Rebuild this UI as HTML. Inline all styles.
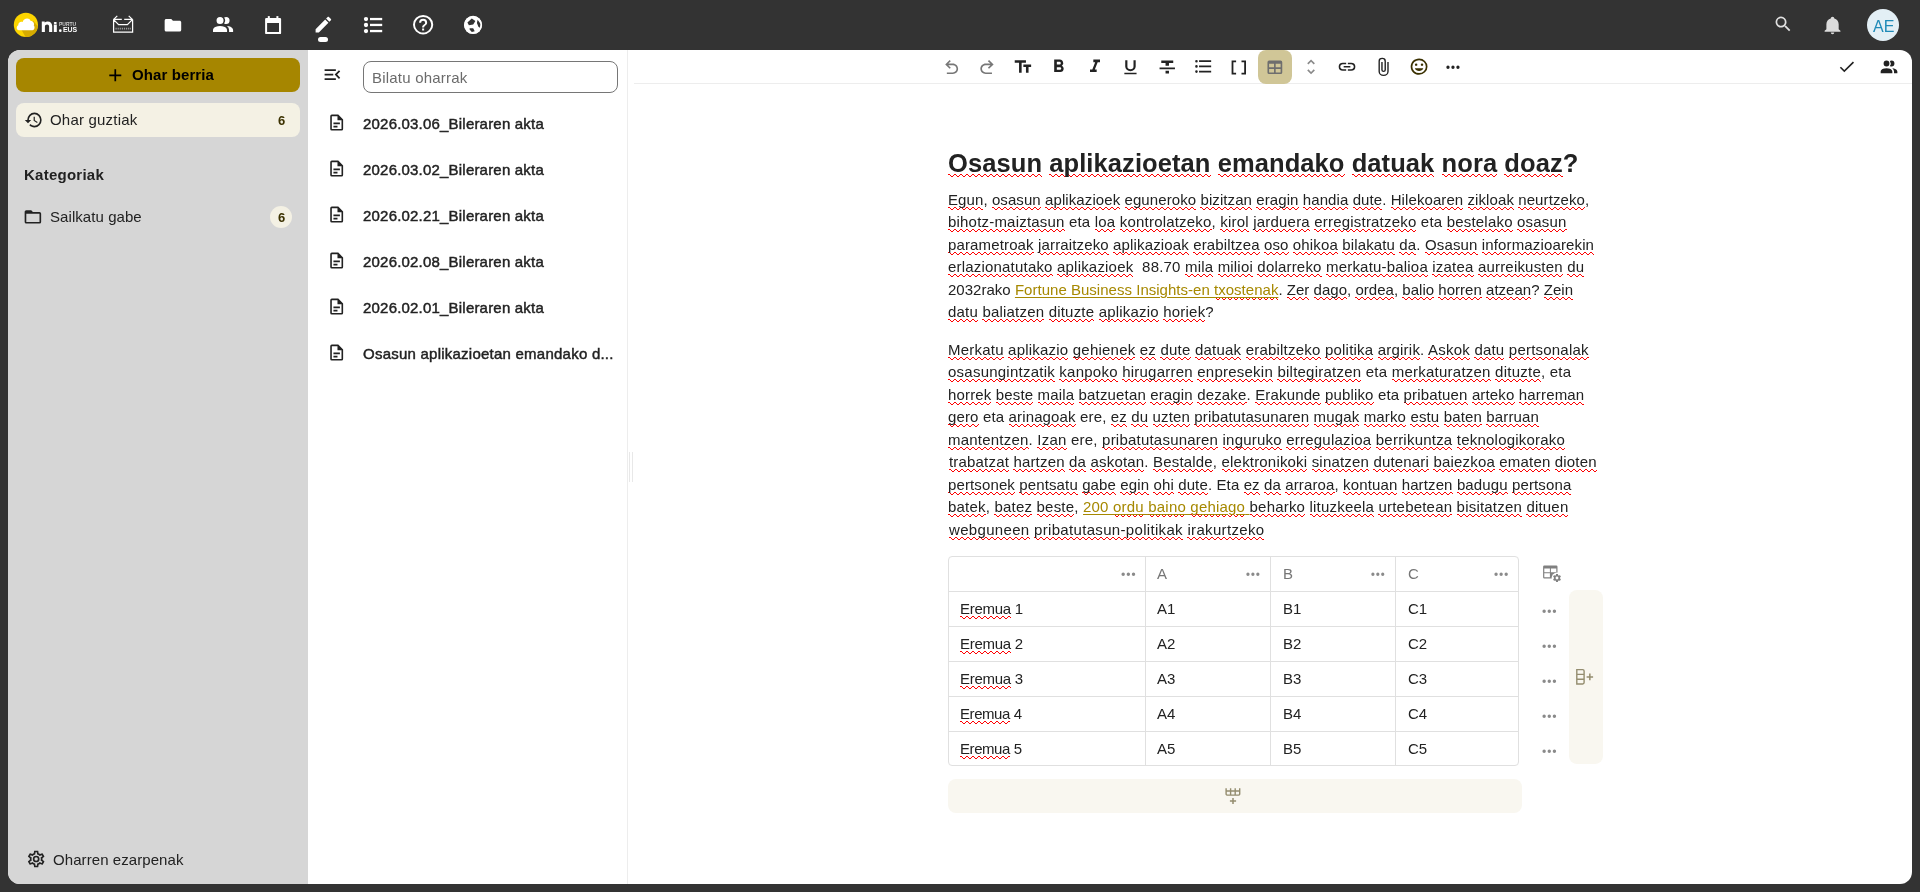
<!DOCTYPE html>
<html><head><meta charset="utf-8">
<style>
*{box-sizing:border-box;margin:0;padding:0}
html,body{width:1920px;height:892px;overflow:hidden;background:#333333;font-family:"Liberation Sans",sans-serif;color:#222}
.a{position:absolute}
.t{position:absolute;white-space:nowrap;will-change:transform}
svg{position:absolute;display:block;overflow:visible}
.w{padding-bottom:3px;background-image:linear-gradient(90deg,#f00 0 2px,transparent 2px 6px),linear-gradient(90deg,transparent 0 2px,#f00 2px 3px,transparent 3px 5px,#f00 5px 6px),linear-gradient(90deg,transparent 0 3px,#f00 3px 5px,transparent 5px 6px);background-repeat:repeat-x;background-size:6px 1px;}
.s15 .w{background-position:0 16px,0 17px,0 18px}
.s25 .w{background-position:0 25px,0 26px,0 27px}
.lk{color:#a68800;text-decoration:underline;text-underline-offset:2px;text-decoration-color:#a68800}
</style></head><body>
<div class="a" style="left:8px;top:50px;width:1904px;height:834px;background:#fff;border-radius:12px;overflow:hidden"></div>
<div class="a" style="left:8px;top:50px;width:300px;height:834px;background:#d6d6d6;border-radius:12px 0 0 12px"></div>
<div class="a" style="left:627px;top:50px;width:1px;height:834px;background:#ededed"></div>
<div class="a" style="left:634px;top:83px;width:1278px;height:1px;background:#ededed"></div>
<div class="a" style="left:629px;top:452px;width:1px;height:30px;background:#e8e8e8"></div>
<div class="a" style="left:632px;top:452px;width:1px;height:30px;background:#e8e8e8"></div>
<svg style="left:8px;top:8px;width:80px;height:34px" viewBox="8 8 80 34"><defs><clipPath id="lc"><circle cx="25.9" cy="24.9" r="12.1"/></clipPath></defs><circle cx="25.9" cy="24.9" r="12.1" fill="#fcd500"/><path clip-path="url(#lc)" d="M21 29 L33.5 21 L45 35 L30 45 Z" fill="#d6ab00"/><path d="M18.8 30.3 C16.4 30.3 16 26.3 18.3 25.3 C18 22.3 21 20.9 22.7 22 C23.3 17.9 29.6 17.2 30.7 21 C33 20.9 34.8 23.3 33.8 25.6 C35.3 27.1 34.4 30.3 32.5 30.3 Z" fill="#fff"/><path d="M41.8 32 V21.6 H44.7 V22.6 C45.5 21.8 46.5 21.4 47.6 21.4 C50.4 21.4 52.2 23.2 52.2 26 V32 H49.1 V26.4 C49.1 25.1 48.3 24.4 47.2 24.4 C45.9 24.4 44.9 25.2 44.9 26.6 V32 Z" fill="#fff"/><rect x="53.8" y="24.5" width="3" height="7.5" fill="#fff"/><rect x="53.8" y="22" width="3" height="1.9" rx="0.9" fill="#fff"/><circle cx="60.3" cy="30.7" r="1.35" fill="#fff"/></svg>
<div class="t" style="left:59px;top:22.6px;font-size:4.6px;line-height:4.6px;font-weight:700;color:#d0d0d0;transform:scaleX(1.08);transform-origin:0 0">PURTU</div>
<div class="t" style="left:62.5px;top:27.1px;font-size:6.9px;line-height:6.9px;font-weight:700;color:#fff">EUS</div>
<svg style="left:105px;top:10px;width:40px;height:30px" viewBox="105 10 40 30"><path d="M113.6 19.4 V32.2 H132.6 V19.4 M113.4 19.4 L118.6 24.6 H127.4 L132.6 19.4 M113.2 19.4 H121.8 M124.2 19.4 H132.8 M117.3 15.9 L113.4 19.6 M128.7 15.9 L132.6 19.6" fill="none" stroke="#fff" stroke-width="1.25"/><path d="M115.5 28.6 H131" stroke="#9a9a9a" stroke-width="1.6" stroke-dasharray="1.2 0.9"/></svg>
<svg style="left:163.04px;top:15.81px;width:19.86px;height:18.53px" viewBox="0 0 24 24" preserveAspectRatio="none"><path fill="#ffffff" d="M10,4H4C2.89,4 2,4.89 2,6V18A2,2 0 0,0 4,20H20A2,2 0 0,0 22,18V8C22,6.89 21.1,6 20,6H12L10,4Z"/></svg>
<svg style="left:210.89px;top:12.90px;width:24.12px;height:24.00px" viewBox="0 0 24 24" preserveAspectRatio="none"><path fill="#ffffff" d="M16 17V19H2V17S2 13 9 13 16 17 16 17M12.5 7.5A3.5 3.5 0 1 0 9 11A3.5 3.5 0 0 0 12.5 7.5M15.94 13A5.32 5.32 0 0 1 18 17V19H22V17S22 13.37 15.94 13M15 4A3.39 3.39 0 0 0 13.07 4.59A5 5 0 0 1 13.07 10.41A3.39 3.39 0 0 0 15 11A3.5 3.5 0 0 0 18.5 7.5A3.5 3.5 0 0 0 15 4Z"/></svg>
<svg style="left:258px;top:10px;width:30px;height:30px" viewBox="258 10 30 30"><path fill-rule="evenodd" fill="#fff" d="M266.3 17.9 H279.9 A1.2 1.2 0 0 1 281.1 19.1 V32.9 A1.2 1.2 0 0 1 279.9 34.1 H266.3 A1.2 1.2 0 0 1 265.1 32.9 V19.1 A1.2 1.2 0 0 1 266.3 17.9 Z M267.1 23.1 V31.9 H279 V23.1 Z"/><rect x="267.8" y="16.1" width="2" height="2.5" fill="#fff"/><rect x="276.4" y="16.1" width="2" height="2.5" fill="#fff"/></svg>
<svg style="left:312.50px;top:14.47px;width:20.80px;height:21.07px" viewBox="0 0 24 24" preserveAspectRatio="none"><path fill="#ffffff" d="M20.71,7.04C21.1,6.65 21.1,6 20.71,5.63L18.37,3.29C18,2.9 17.35,2.9 16.96,3.29L15.12,5.12L18.87,8.87M3,17.25V21H6.75L17.81,9.93L14.06,6.18L3,17.25Z"/></svg>
<div class="a" style="left:317.7px;top:36.8px;width:10.400000000000034px;height:5.200000000000003px;background:#fff;border-radius:3px"></div>
<svg style="left:355px;top:10px;width:30px;height:30px" viewBox="355 10 30 30"><circle cx="366" cy="19.1" r="2.15" fill="#fff"/><circle cx="366" cy="25" r="2.15" fill="#fff"/><circle cx="366" cy="31.1" r="2.15" fill="#fff"/><rect x="370" y="17.9" width="12.2" height="2.3" fill="#fff"/><rect x="370" y="23.8" width="12.2" height="2.3" fill="#fff"/><rect x="370" y="29.9" width="12.2" height="2.3" fill="#fff"/></svg>
<svg style="left:410.78px;top:13.45px;width:24.24px;height:23.40px" viewBox="0 0 24 24" preserveAspectRatio="none"><path fill="#ffffff" d="M11,18H13V16H11V18M12,2A10,10 0 0,0 2,12A10,10 0 0,0 12,22A10,10 0 0,0 22,12A10,10 0 0,0 12,2M12,20C7.59,20 4,16.41 4,12C4,7.59 7.59,4 12,4C16.41,4 20,7.59 20,12C20,16.41 16.41,20 12,20M12,6A4,4 0 0,0 8,10H10A2,2 0 0,1 12,8A2,2 0 0,1 14,10C14,12 11,11.75 11,15H13C13,12.75 16,12.5 16,10A4,4 0 0,0 12,6Z"/></svg>
<svg style="left:460px;top:12px;width:26px;height:26px" viewBox="460 12 26 26"><circle cx="473.05" cy="24.95" r="9.1" fill="#fff"/><path fill="#333" d="M467.4 22.4 L471.8 18.6 L475.4 20.9 L473.2 24.6 L468.9 25.3 Z M477.6 19.8 L480.7 23.9 L480 27.8 L478.4 26.8 L476.9 23.1 Z M469.6 28.2 L473.2 28.2 L474.7 31.2 L471.8 31.9 L469.6 29.4 Z"/><circle cx="473.05" cy="24.95" r="8.2" fill="none" stroke="#fff" stroke-width="1.3"/></svg>
<svg style="left:1772.66px;top:14.46px;width:20.30px;height:20.30px" viewBox="0 0 24 24" preserveAspectRatio="none"><path fill="#e0e0e0" d="M9.5,3A6.5,6.5 0 0,1 16,9.5C16,11.11 15.41,12.59 14.44,13.73L14.71,14H15.5L20.5,19L19,20.5L14,15.5V14.71L13.73,14.44C12.59,15.41 11.11,16 9.5,16A6.5,6.5 0 0,1 3,9.5A6.5,6.5 0 0,1 9.5,3M9.5,5C7,5 5,7 5,9.5C5,12 7,14 9.5,14C12,14 14,12 14,9.5C14,7 12,5 9.5,5Z"/></svg>
<svg style="left:1822.37px;top:15.03px;width:21.07px;height:20.00px" viewBox="0 0 24 24" preserveAspectRatio="none"><path fill="#dcdcdc" d="M21,19V20H3V19L5,17V11C5,7.9 7.03,5.17 10,4.29C10,4.19 10,4.1 10,4A2,2 0 0,1 12,2A2,2 0 0,1 14,4C14,4.1 14,4.19 14,4.29C16.97,5.17 19,7.9 19,11V17L21,19M14,21A2,2 0 0,1 12,23A2,2 0 0,1 10,21"/></svg>
<div class="a" style="left:1867px;top:9px;width:32px;height:32px;border-radius:50%;background:#e3eff5"></div>
<div class="t" style="left:1872.7px;top:18.5px;font-size:16px;line-height:16px;color:#1f8ab8">AE</div>
<div class="a" style="left:16px;top:58px;width:284px;height:34px;background:#a68600;border-radius:8px"></div>
<svg style="left:104.71px;top:64.71px;width:20.57px;height:20.57px" viewBox="0 0 24 24" preserveAspectRatio="none"><path fill="#000" d="M19,13H13V19H11V13H5V11H11V5H13V11H19V13Z"/></svg>
<div class="a" style="left:16px;top:103px;width:284px;height:34px;background:#f4f1e4;border-radius:8px"></div>
<svg style="left:23.60px;top:110.00px;width:19.26px;height:20.00px" viewBox="0 0 24 24" preserveAspectRatio="none"><path fill="#222" d="M13.5,8H12V13L16.28,15.54L17,14.33L13.5,12.25V8M13,3A9,9 0 0,0 4,12H1L4.96,16.03L9,12H6A7,7 0 0,1 13,5A7,7 0 0,1 20,12A7,7 0 0,1 13,19C11.07,19 9.32,18.21 8.06,16.94L6.64,18.36C8.27,20 10.5,21 13,21A9,9 0 0,0 22,12A9,9 0 0,0 13,3"/></svg>
<svg style="left:23.05px;top:206.68px;width:19.80px;height:19.95px" viewBox="0 0 24 24" preserveAspectRatio="none"><path fill="#222" d="M20,18H4V8H20M20,6H12L10,4H4C2.89,4 2,4.89 2,6V18A2,2 0 0,0 4,20H20A2,2 0 0,0 22,18V8C22,6.89 21.1,6 20,6Z"/></svg>
<div class="a" style="left:270px;top:206px;width:22px;height:22px;background:#f4f1e4;border-radius:11px"></div>
<svg style="left:25.78px;top:849.13px;width:20.35px;height:20.04px" viewBox="0 0 24 24" preserveAspectRatio="none"><path fill="#222" d="M12,8A4,4 0 0,1 16,12A4,4 0 0,1 12,16A4,4 0 0,1 8,12A4,4 0 0,1 12,8M12,10A2,2 0 0,0 10,12A2,2 0 0,0 12,14A2,2 0 0,0 14,12A2,2 0 0,0 12,10M10,22C9.75,22 9.54,21.82 9.5,21.58L9.13,18.93C8.5,18.68 7.96,18.34 7.44,17.94L4.95,18.95C4.73,19.03 4.46,18.95 4.34,18.73L2.34,15.27C2.21,15.05 2.27,14.78 2.46,14.63L4.57,12.97L4.5,12L4.57,11L2.46,9.37C2.27,9.22 2.21,8.95 2.34,8.73L4.34,5.27C4.46,5.05 4.73,4.96 4.95,5.05L7.44,6.05C7.96,5.66 8.5,5.32 9.13,5.07L9.5,2.42C9.54,2.18 9.75,2 10,2H14C14.25,2 14.46,2.18 14.5,2.42L14.87,5.07C15.5,5.32 16.04,5.66 16.56,6.05L19.05,5.05C19.27,4.96 19.54,5.05 19.66,5.27L21.66,8.73C21.79,8.95 21.73,9.22 21.54,9.37L19.43,11L19.5,12L19.43,13L21.54,14.63C21.73,14.78 21.79,15.05 21.66,15.27L19.66,18.73C19.54,18.95 19.27,19.04 19.05,18.95L16.56,17.95C16.04,18.34 15.5,18.68 14.87,18.93L14.5,21.58C14.46,21.82 14.25,22 14,22H10M11.25,4L10.88,6.61C9.68,6.86 8.62,7.5 7.85,8.39L5.44,7.35L4.69,8.65L6.8,10.2C6.4,11.37 6.4,12.64 6.8,13.8L4.68,15.36L5.43,16.66L7.86,15.62C8.63,16.5 9.68,17.14 10.87,17.38L11.24,20H12.76L13.13,17.39C14.32,17.14 15.37,16.5 16.14,15.62L18.57,16.66L19.32,15.36L17.2,13.81C17.6,12.64 17.6,11.37 17.2,10.2L19.31,8.65L18.56,7.35L16.15,8.39C15.38,7.5 14.32,6.86 13.12,6.62L12.75,4H11.25Z"/></svg>
<svg style="left:322.20px;top:64.20px;width:20.80px;height:21.20px" viewBox="0 0 24 24" preserveAspectRatio="none"><path fill="#222" d="M21,15.61L19.59,17L14.58,12L19.59,7L21,8.39L17.44,12L21,15.61M3,6H16V8H3V6M3,13V11H13V13H3M3,18V16H16V18H3Z"/></svg>
<div class="a" style="left:363px;top:61px;width:255px;height:32px;border:1px solid #767676;border-radius:8px;background:#fff"></div>
<svg style="left:327.17px;top:113.30px;width:19.35px;height:19.20px" viewBox="0 0 24 24" preserveAspectRatio="none"><path fill="#222" d="M6,2A2,2 0 0,0 4,4V20A2,2 0 0,0 6,22H18A2,2 0 0,0 20,20V8L14,2H6M6,4H13V9H18V20H6V4M8,12V14H16V12H8M8,16V18H13V16H8Z"/></svg>
<svg style="left:327.17px;top:159.30px;width:19.35px;height:19.20px" viewBox="0 0 24 24" preserveAspectRatio="none"><path fill="#222" d="M6,2A2,2 0 0,0 4,4V20A2,2 0 0,0 6,22H18A2,2 0 0,0 20,20V8L14,2H6M6,4H13V9H18V20H6V4M8,12V14H16V12H8M8,16V18H13V16H8Z"/></svg>
<svg style="left:327.17px;top:205.30px;width:19.35px;height:19.20px" viewBox="0 0 24 24" preserveAspectRatio="none"><path fill="#222" d="M6,2A2,2 0 0,0 4,4V20A2,2 0 0,0 6,22H18A2,2 0 0,0 20,20V8L14,2H6M6,4H13V9H18V20H6V4M8,12V14H16V12H8M8,16V18H13V16H8Z"/></svg>
<svg style="left:327.17px;top:251.30px;width:19.35px;height:19.20px" viewBox="0 0 24 24" preserveAspectRatio="none"><path fill="#222" d="M6,2A2,2 0 0,0 4,4V20A2,2 0 0,0 6,22H18A2,2 0 0,0 20,20V8L14,2H6M6,4H13V9H18V20H6V4M8,12V14H16V12H8M8,16V18H13V16H8Z"/></svg>
<svg style="left:327.17px;top:297.30px;width:19.35px;height:19.20px" viewBox="0 0 24 24" preserveAspectRatio="none"><path fill="#222" d="M6,2A2,2 0 0,0 4,4V20A2,2 0 0,0 6,22H18A2,2 0 0,0 20,20V8L14,2H6M6,4H13V9H18V20H6V4M8,12V14H16V12H8M8,16V18H13V16H8Z"/></svg>
<svg style="left:327.17px;top:343.30px;width:19.35px;height:19.20px" viewBox="0 0 24 24" preserveAspectRatio="none"><path fill="#222" d="M6,2A2,2 0 0,0 4,4V20A2,2 0 0,0 6,22H18A2,2 0 0,0 20,20V8L14,2H6M6,4H13V9H18V20H6V4M8,12V14H16V12H8M8,16V18H13V16H8Z"/></svg>
<div class="a" style="left:1258px;top:50px;width:34px;height:34px;background:#d0c697;border-radius:8px"></div>
<svg style="left:941.57px;top:57.60px;width:19.35px;height:19.20px" viewBox="0 0 24 24" preserveAspectRatio="none"><path fill="#777" d="M20 13.5C20 17.09 17.09 20 13.5 20H6V18H13.5C16 18 18 16 18 13.5S16 9 13.5 9H7.83L10.91 12.09L9.5 13.5L4 8L9.5 2.5L10.92 3.91L7.83 7H13.5C17.09 7 20 9.91 20 13.5Z"/></svg>
<svg style="left:976.67px;top:57.60px;width:19.95px;height:19.20px" viewBox="0 0 24 24" preserveAspectRatio="none"><path fill="#777" d="M4 13.5C4 17.09 6.91 20 10.5 20H18V18H10.5C8 18 6 16 6 13.5S8 9 10.5 9H16.17L13.09 12.09L14.5 13.5L20 8L14.5 2.5L13.08 3.91L16.17 7H10.5C6.91 7 4 9.91 4 13.5Z"/></svg>
<svg style="left:1012.67px;top:56.79px;width:20.72px;height:19.84px" viewBox="0 0 24 24" preserveAspectRatio="none"><path fill="#222" d="M2 4V7H7V19H10V7H15V4H2M21 9H12V12H15V19H18V12H21V9Z"/></svg>
<svg style="left:1048.31px;top:56.43px;width:21.21px;height:21.43px" viewBox="0 0 24 24" preserveAspectRatio="none"><path fill="#222" d="M13.5,15.5H10V12.5H13.5A1.5,1.5 0 0,1 15,14A1.5,1.5 0 0,1 13.5,15.5M10,6.5H13A1.5,1.5 0 0,1 14.5,8A1.5,1.5 0 0,1 13,9.5H10M15.6,10.79C16.57,10.11 17.25,9 17.25,8C17.25,5.74 15.5,4 13.25,4H7V18H14.04C16.14,18 17.75,16.3 17.75,14.21C17.75,12.69 16.89,11.39 15.6,10.79Z"/></svg>
<svg style="left:1085.00px;top:56.43px;width:20.00px;height:21.43px" viewBox="0 0 24 24" preserveAspectRatio="none"><path fill="#222" d="M10,4V7H12.21L8.79,15H6V18H14V15H11.79L15.21,7H18V4H10Z"/></svg>
<svg style="left:1120.44px;top:57.67px;width:20.91px;height:18.67px" viewBox="0 0 24 24" preserveAspectRatio="none"><path fill="#222" d="M5,21H19V19H5V21M12,17A6,6 0 0,0 18,11V3H15.5V11A3.5,3.5 0 0,1 12,14.5A3.5,3.5 0 0,1 8.5,11V3H6V11A6,6 0 0,0 12,17Z"/></svg>
<svg style="left:1156.73px;top:56.53px;width:20.53px;height:20.80px" viewBox="0 0 24 24" preserveAspectRatio="none"><path fill="#222" d="M3,14H21V12H3M5,4V7H10V10H14V7H19V4M10,19H14V16H10V19Z"/></svg>
<svg style="left:1192.64px;top:56.10px;width:20.76px;height:20.80px" viewBox="0 0 24 24" preserveAspectRatio="none"><path fill="#222" d="M7,5H21V7H7V5M7,13V11H21V13H7M4,4.5A1.5,1.5 0 0,1 5.5,6A1.5,1.5 0 0,1 4,7.5A1.5,1.5 0 0,1 2.5,6A1.5,1.5 0 0,1 4,4.5M4,10.5A1.5,1.5 0 0,1 5.5,12A1.5,1.5 0 0,1 4,13.5A1.5,1.5 0 0,1 2.5,12A1.5,1.5 0 0,1 4,10.5M7,19V17H21V19H7M4,16.5A1.5,1.5 0 0,1 5.5,18A1.5,1.5 0 0,1 4,19.5A1.5,1.5 0 0,1 2.5,18A1.5,1.5 0 0,1 4,16.5Z"/></svg>
<svg style="left:1228.40px;top:56.50px;width:21.60px;height:21.00px" viewBox="0 0 24 24" preserveAspectRatio="none"><path fill="#222" d="M15,4V6H18V18H15V20H20V4M4,4V20H9V18H6V6H9V4H4Z"/></svg>
<svg style="left:1265.03px;top:56.78px;width:19.73px;height:20.55px" viewBox="0 0 24 24" preserveAspectRatio="none"><path fill="#6e6e6e" d="M5,4H19A2,2 0 0,1 21,6V18A2,2 0 0,1 19,20H5A2,2 0 0,1 3,18V6A2,2 0 0,1 5,4M5,8V12H11V8H5M13,8V12H19V8H13M5,14V18H11V14H5M13,14V18H19V14H13Z"/></svg>
<svg style="left:1300.78px;top:57.23px;width:20.13px;height:19.73px" viewBox="0 0 24 24" preserveAspectRatio="none"><path fill="#8a8a8a" d="M12,18.17L8.83,15L7.42,16.41L12,21L16.59,16.41L15.17,15M12,5.83L15.17,9L16.58,7.59L12,3L7.41,7.59L8.83,9L12,5.83Z"/></svg>
<svg style="left:1336.93px;top:57.33px;width:20.04px;height:19.44px" viewBox="0 0 24 24" preserveAspectRatio="none"><path fill="#222" d="M3.9,12C3.9,10.29 5.29,8.9 7,8.9H11V7H7A5,5 0 0,0 2,12A5,5 0 0,0 7,17H11V15.1H7C5.29,15.1 3.9,13.71 3.9,12M8,13H16V11H8V13M17,7H13V8.9H17C18.71,8.9 20.1,10.29 20.1,12C20.1,13.71 18.71,15.1 17,15.1H13V17H17A5,5 0 0,0 22,12A5,5 0 0,0 17,7Z"/></svg>
<svg style="left:1371.91px;top:56.67px;width:22.25px;height:19.96px" viewBox="0 0 24 24" preserveAspectRatio="none"><path fill="#222" d="M16.5,6V17.5A4,4 0 0,1 12.5,21.5A4,4 0 0,1 8.5,17.5V5A2.5,2.5 0 0,1 11,2.5A2.5,2.5 0 0,1 13.5,5V15.5A1,1 0 0,1 12.5,16.5A1,1 0 0,1 11.5,15.5V6H10V15.5A2.5,2.5 0 0,0 12.5,18A2.5,2.5 0 0,0 15,15.5V5A4,4 0 0,0 11,1A4,4 0 0,0 7,5V17.5A5.5,5.5 0 0,0 12.5,23A5.5,5.5 0 0,0 18,17.5V6H16.5Z"/></svg>
<svg style="left:1408.82px;top:57.29px;width:20.16px;height:19.32px" viewBox="0 0 24 24" preserveAspectRatio="none"><path fill="#3a3000" d="M12,2C6.47,2 2,6.47 2,12C2,17.53 6.47,22 12,22A10,10 0 0,0 22,12A10,10 0 0,0 12,2M12,20A8,8 0 0,1 4,12A8,8 0 0,1 12,4A8,8 0 0,1 20,12A8,8 0 0,1 12,20M8.5,11A1.5,1.5 0 0,0 10,9.5A1.5,1.5 0 0,0 8.5,8A1.5,1.5 0 0,0 7,9.5A1.5,1.5 0 0,0 8.5,11M15.5,11A1.5,1.5 0 0,0 17,9.5A1.5,1.5 0 0,0 15.5,8A1.5,1.5 0 0,0 14,9.5A1.5,1.5 0 0,0 15.5,11M12,17.5C14.33,17.5 16.31,16.04 17.11,14H6.89C7.69,16.04 9.67,17.5 12,17.5Z"/></svg>
<svg style="left:1443.08px;top:56.70px;width:19.95px;height:20.40px" viewBox="0 0 24 24" preserveAspectRatio="none"><path fill="#222" d="M16,12A2,2 0 0,1 18,10A2,2 0 0,1 20,12A2,2 0 0,1 18,14A2,2 0 0,1 16,12M10,12A2,2 0 0,1 12,10A2,2 0 0,1 14,12A2,2 0 0,1 12,14A2,2 0 0,1 10,12M4,12A2,2 0 0,1 6,10A2,2 0 0,1 8,12A2,2 0 0,1 6,14A2,2 0 0,1 4,12Z"/></svg>
<svg style="left:1837.16px;top:57.40px;width:19.47px;height:19.33px" viewBox="0 0 24 24" preserveAspectRatio="none"><path fill="#222" d="M21,7L9,19L3.5,13.5L4.91,12.09L9,16.17L19.59,5.59L21,7Z"/></svg>
<svg style="left:1879.03px;top:56.56px;width:20.04px;height:20.64px" viewBox="0 0 24 24" preserveAspectRatio="none"><path fill="#222" d="M16 17V19H2V17S2 13 9 13 16 17 16 17M12.5 7.5A3.5 3.5 0 1 0 9 11A3.5 3.5 0 0 0 12.5 7.5M15.94 13A5.32 5.32 0 0 1 18 17V19H22V17S22 13.37 15.94 13M15 4A3.39 3.39 0 0 0 13.07 4.59A5 5 0 0 1 13.07 10.41A3.39 3.39 0 0 0 15 11A3.5 3.5 0 0 0 18.5 7.5A3.5 3.5 0 0 0 15 4Z"/></svg>
<div class="a" style="left:948px;top:556px;width:571px;height:210px;border:1px solid #e0e0e0;border-radius:4px"></div>
<div class="a" style="left:1145px;top:556px;width:1px;height:210px;background:#e0e0e0"></div>
<div class="a" style="left:1270px;top:556px;width:1px;height:210px;background:#e0e0e0"></div>
<div class="a" style="left:1395px;top:556px;width:1px;height:210px;background:#e0e0e0"></div>
<div class="a" style="left:948px;top:591px;width:571px;height:1px;background:#e0e0e0"></div>
<div class="a" style="left:948px;top:626px;width:571px;height:1px;background:#e0e0e0"></div>
<div class="a" style="left:948px;top:661px;width:571px;height:1px;background:#e0e0e0"></div>
<div class="a" style="left:948px;top:696px;width:571px;height:1px;background:#e0e0e0"></div>
<div class="a" style="left:948px;top:731px;width:571px;height:1px;background:#e0e0e0"></div>
<svg style="left:1117.55px;top:563.70px;width:20.70px;height:20.40px" viewBox="0 0 24 24" preserveAspectRatio="none"><path fill="#8a8a8a" d="M16,12A2,2 0 0,1 18,10A2,2 0 0,1 20,12A2,2 0 0,1 18,14A2,2 0 0,1 16,12M10,12A2,2 0 0,1 12,10A2,2 0 0,1 14,12A2,2 0 0,1 12,14A2,2 0 0,1 10,12M4,12A2,2 0 0,1 6,10A2,2 0 0,1 8,12A2,2 0 0,1 6,14A2,2 0 0,1 4,12Z"/></svg>
<svg style="left:1243.10px;top:563.70px;width:19.80px;height:20.40px" viewBox="0 0 24 24" preserveAspectRatio="none"><path fill="#8a8a8a" d="M16,12A2,2 0 0,1 18,10A2,2 0 0,1 20,12A2,2 0 0,1 18,14A2,2 0 0,1 16,12M10,12A2,2 0 0,1 12,10A2,2 0 0,1 14,12A2,2 0 0,1 12,14A2,2 0 0,1 10,12M4,12A2,2 0 0,1 6,10A2,2 0 0,1 8,12A2,2 0 0,1 6,14A2,2 0 0,1 4,12Z"/></svg>
<svg style="left:1368.32px;top:563.70px;width:19.65px;height:20.40px" viewBox="0 0 24 24" preserveAspectRatio="none"><path fill="#8a8a8a" d="M16,12A2,2 0 0,1 18,10A2,2 0 0,1 20,12A2,2 0 0,1 18,14A2,2 0 0,1 16,12M10,12A2,2 0 0,1 12,10A2,2 0 0,1 14,12A2,2 0 0,1 12,14A2,2 0 0,1 10,12M4,12A2,2 0 0,1 6,10A2,2 0 0,1 8,12A2,2 0 0,1 6,14A2,2 0 0,1 4,12Z"/></svg>
<svg style="left:1491.03px;top:563.70px;width:20.25px;height:20.40px" viewBox="0 0 24 24" preserveAspectRatio="none"><path fill="#8a8a8a" d="M16,12A2,2 0 0,1 18,10A2,2 0 0,1 20,12A2,2 0 0,1 18,14A2,2 0 0,1 16,12M10,12A2,2 0 0,1 12,10A2,2 0 0,1 14,12A2,2 0 0,1 12,14A2,2 0 0,1 10,12M4,12A2,2 0 0,1 6,10A2,2 0 0,1 8,12A2,2 0 0,1 6,14A2,2 0 0,1 4,12Z"/></svg>
<svg style="left:1538.78px;top:600.50px;width:20.55px;height:20.40px" viewBox="0 0 24 24" preserveAspectRatio="none"><path fill="#8a8a8a" d="M16,12A2,2 0 0,1 18,10A2,2 0 0,1 20,12A2,2 0 0,1 18,14A2,2 0 0,1 16,12M10,12A2,2 0 0,1 12,10A2,2 0 0,1 14,12A2,2 0 0,1 12,14A2,2 0 0,1 10,12M4,12A2,2 0 0,1 6,10A2,2 0 0,1 8,12A2,2 0 0,1 6,14A2,2 0 0,1 4,12Z"/></svg>
<svg style="left:1538.78px;top:635.50px;width:20.55px;height:20.40px" viewBox="0 0 24 24" preserveAspectRatio="none"><path fill="#8a8a8a" d="M16,12A2,2 0 0,1 18,10A2,2 0 0,1 20,12A2,2 0 0,1 18,14A2,2 0 0,1 16,12M10,12A2,2 0 0,1 12,10A2,2 0 0,1 14,12A2,2 0 0,1 12,14A2,2 0 0,1 10,12M4,12A2,2 0 0,1 6,10A2,2 0 0,1 8,12A2,2 0 0,1 6,14A2,2 0 0,1 4,12Z"/></svg>
<svg style="left:1538.78px;top:670.50px;width:20.55px;height:20.40px" viewBox="0 0 24 24" preserveAspectRatio="none"><path fill="#8a8a8a" d="M16,12A2,2 0 0,1 18,10A2,2 0 0,1 20,12A2,2 0 0,1 18,14A2,2 0 0,1 16,12M10,12A2,2 0 0,1 12,10A2,2 0 0,1 14,12A2,2 0 0,1 12,14A2,2 0 0,1 10,12M4,12A2,2 0 0,1 6,10A2,2 0 0,1 8,12A2,2 0 0,1 6,14A2,2 0 0,1 4,12Z"/></svg>
<svg style="left:1538.78px;top:705.50px;width:20.55px;height:20.40px" viewBox="0 0 24 24" preserveAspectRatio="none"><path fill="#8a8a8a" d="M16,12A2,2 0 0,1 18,10A2,2 0 0,1 20,12A2,2 0 0,1 18,14A2,2 0 0,1 16,12M10,12A2,2 0 0,1 12,10A2,2 0 0,1 14,12A2,2 0 0,1 12,14A2,2 0 0,1 10,12M4,12A2,2 0 0,1 6,10A2,2 0 0,1 8,12A2,2 0 0,1 6,14A2,2 0 0,1 4,12Z"/></svg>
<svg style="left:1538.78px;top:740.50px;width:20.55px;height:20.40px" viewBox="0 0 24 24" preserveAspectRatio="none"><path fill="#8a8a8a" d="M16,12A2,2 0 0,1 18,10A2,2 0 0,1 20,12A2,2 0 0,1 18,14A2,2 0 0,1 16,12M10,12A2,2 0 0,1 12,10A2,2 0 0,1 14,12A2,2 0 0,1 12,14A2,2 0 0,1 10,12M4,12A2,2 0 0,1 6,10A2,2 0 0,1 8,12A2,2 0 0,1 6,14A2,2 0 0,1 4,12Z"/></svg>
<svg style="left:1536px;top:560px;width:30px;height:30px" viewBox="1536 560 30 30"><path fill-rule="evenodd" fill="#808080" d="M1544.3 565.6 H1556.3 A1.2 1.2 0 0 1 1557.5 566.8 V578.5 H1544.3 A1.2 1.2 0 0 1 1543.1 577.3 V566.8 A1.2 1.2 0 0 1 1544.3 565.6 Z M1544.3 568.5 V572.2 H1549.9 V568.5 Z M1550.9 568.5 V572.2 H1556.3 V568.5 Z M1544.3 573.2 V577.3 H1549.9 V573.2 Z"/><circle cx="1557" cy="578" r="5.4" fill="#fff"/><path transform="translate(1552.2 573.2) scale(0.4)" fill="#808080" d="M12,15.5A3.5,3.5 0 0,1 8.5,12A3.5,3.5 0 0,1 12,8.5A3.5,3.5 0 0,1 15.5,12A3.5,3.5 0 0,1 12,15.5M19.43,12.97C19.47,12.65 19.5,12.33 19.5,12C19.5,11.67 19.47,11.34 19.43,11L21.54,9.37C21.73,9.22 21.78,8.95 21.66,8.73L19.66,5.27C19.54,5.050 19.27,4.96 19.05,5.05L16.56,6.05C16.04,5.66 15.5,5.32 14.87,5.07L14.5,2.42C14.46,2.18 14.25,2 14,2H10C9.75,2 9.54,2.18 9.5,2.42L9.13,5.07C8.5,5.32 7.960,5.66 7.44,6.05L4.95,5.05C4.73,4.96 4.46,5.05 4.34,5.27L2.34,8.73C2.21,8.95 2.27,9.22 2.46,9.37L4.57,11C4.53,11.34 4.5,11.67 4.5,12C4.5,12.33 4.53,12.65 4.57,12.97L2.46,14.63C2.27,14.78 2.21,15.05 2.34,15.27L4.34,18.73C4.46,18.95 4.73,19.03 4.95,18.95L7.44,17.94C7.96,18.34 8.5,18.68 9.13,18.93L9.5,21.58C9.54,21.82 9.75,22 10,22H14C14.25,22 14.46,21.82 14.5,21.58L14.87,18.93C15.5,18.67 16.04,18.34 16.56,17.94L19.05,18.95C19.27,19.03 19.54,18.95 19.66,18.73L21.66,15.27C21.78,15.05 21.73,14.78 21.54,14.63L19.43,12.97Z"/></svg>
<div class="a" style="left:1569.4px;top:590.3px;width:33.399999999999864px;height:174.10000000000002px;background:#f9f7f0;border-radius:8px"></div>
<svg style="left:1570px;top:660px;width:30px;height:30px" viewBox="1570 660 30 30"><path d="M1576.8 669.6 H1582.7 A1.4 1.4 0 0 1 1584.1 671 V682.6 A1.4 1.4 0 0 1 1582.7 684 H1576.8 Z M1576.8 674.4 H1584.1 M1576.8 679.3 H1584.1" stroke="#948d6f" stroke-width="1.4" fill="none"/><path d="M1586.6 676.9 H1593.1 M1589.85 673.6 V680.2" stroke="#948d6f" stroke-width="1.5"/></svg>
<div class="a" style="left:947.8px;top:779.2px;width:574.7px;height:33.69999999999993px;background:#f9f7f0;border-radius:8px"></div>
<svg style="left:1215px;top:780px;width:35px;height:32px" viewBox="1215 780 35 32"><path d="M1226.1 788.2 V794.3 A1.4 1.4 0 0 0 1227.5 795.1 H1238.3 A1.4 1.4 0 0 0 1239.7 794.3 V788.2 M1230.6 788.2 V795.1 M1235.2 788.2 V795.1 M1226.1 791 H1239.7" stroke="#948d6f" stroke-width="1.4" fill="none"/><path d="M1229.9 801 H1236.1 M1233 797.9 V803.9" stroke="#948d6f" stroke-width="1.5"/></svg>
<div class="t s25" style="left:947.50px;top:151px;font-size:25.5px;line-height:25.5px;font-weight:700;color:#222;letter-spacing:0.087px;"><span class="w">Osasun</span> <span class="w">aplikazioetan</span> <span class="w">emandako</span> <span class="w">datuak</span> <span class="w">nora</span> <span class="w">doaz</span>?</div>
<div class="t s15" style="left:947.50px;top:192px;font-size:15px;line-height:15px;font-weight:400;color:#222;letter-spacing:0.087px;"><span class="w">Egun</span>, <span class="w">osasun</span> <span class="w">aplikazioek</span> <span class="w">eguneroko</span> <span class="w">bizitzan</span> <span class="w">eragin</span> <span class="w">handia</span> <span class="w">dute</span>. <span class="w">Hilekoaren</span> <span class="w">zikloak</span> <span class="w">neurtzeko</span>,</div>
<div class="t s15" style="left:947.50px;top:214px;font-size:15px;line-height:15px;font-weight:400;color:#222;letter-spacing:0.200px;"><span class="w">bihotz-maiztasun</span> eta <span class="w">loa</span> <span class="w">kontrolatzeko</span>, <span class="w">kirol</span> <span class="w">jarduera</span> <span class="w">erregistratzeko</span> eta <span class="w">bestelako</span> <span class="w">osasun</span></div>
<div class="t s15" style="left:947.50px;top:237px;font-size:15px;line-height:15px;font-weight:400;color:#222;letter-spacing:0.140px;"><span class="w">parametroak</span> <span class="w">jarraitzeko</span> <span class="w">aplikazioak</span> <span class="w">erabiltzea</span> <span class="w">oso</span> <span class="w">ohikoa</span> <span class="w">bilakatu</span> <span class="w">da</span>. <span class="w">Osasun</span> <span class="w">informazioarekin</span></div>
<div class="t s15" style="left:947.50px;top:259px;font-size:15px;line-height:15px;font-weight:400;color:#222;letter-spacing:0.194px;"><span class="w">erlazionatutako</span> <span class="w">aplikazioek</span> &nbsp;88.70 <span class="w">mila</span> <span class="w">milioi</span> <span class="w">dolarreko</span> <span class="w">merkatu-balioa</span> <span class="w">izatea</span> <span class="w">aurreikusten</span> <span class="w">du</span></div>
<div class="t s15" style="left:947.50px;top:282px;font-size:15px;line-height:15px;font-weight:400;color:#222;letter-spacing:0.022px;">2032rako <span class="lk">Fortune Business Insights-en <span class="w">txostenak</span></span>. <span class="w">Zer</span> <span class="w">dago</span>, <span class="w">ordea</span>, <span class="w">balio</span> <span class="w">horren</span> <span class="w">atzean</span>? <span class="w">Zein</span></div>
<div class="t s15" style="left:947.50px;top:304px;font-size:15px;line-height:15px;font-weight:400;color:#222;letter-spacing:0.205px;"><span class="w">datu</span> <span class="w">baliatzen</span> <span class="w">dituzte</span> <span class="w">aplikazio</span> <span class="w">horiek</span>?</div>
<div class="t s15" style="left:947.50px;top:342px;font-size:15px;line-height:15px;font-weight:400;color:#222;letter-spacing:0.215px;"><span class="w">Merkatu</span> <span class="w">aplikazio</span> <span class="w">gehienek</span> <span class="w">ez</span> <span class="w">dute</span> <span class="w">datuak</span> <span class="w">erabiltzeko</span> <span class="w">politika</span> <span class="w">argirik</span>. <span class="w">Askok</span> <span class="w">datu</span> <span class="w">pertsonalak</span></div>
<div class="t s15" style="left:947.50px;top:364px;font-size:15px;line-height:15px;font-weight:400;color:#222;letter-spacing:0.236px;"><span class="w">osasungintzatik</span> <span class="w">kanpoko</span> <span class="w">hirugarren</span> <span class="w">enpresekin</span> <span class="w">biltegiratzen</span> eta <span class="w">merkaturatzen</span> <span class="w">dituzte</span>, eta</div>
<div class="t s15" style="left:947.50px;top:387px;font-size:15px;line-height:15px;font-weight:400;color:#222;letter-spacing:0.157px;"><span class="w">horrek</span> <span class="w">beste</span> <span class="w">maila</span> <span class="w">batzuetan</span> <span class="w">eragin</span> <span class="w">dezake</span>. <span class="w">Erakunde</span> <span class="w">publiko</span> eta <span class="w">pribatuen</span> <span class="w">arteko</span> <span class="w">harreman</span></div>
<div class="t s15" style="left:947.50px;top:409px;font-size:15px;line-height:15px;font-weight:400;color:#222;letter-spacing:0.146px;"><span class="w">gero</span> eta <span class="w">arinagoak</span> ere, <span class="w">ez</span> <span class="w">du</span> <span class="w">uzten</span> <span class="w">pribatutasunaren</span> <span class="w">mugak</span> <span class="w">marko</span> <span class="w">estu</span> <span class="w">baten</span> <span class="w">barruan</span></div>
<div class="t s15" style="left:947.50px;top:432px;font-size:15px;line-height:15px;font-weight:400;color:#222;letter-spacing:0.218px;"><span class="w">mantentzen</span>. <span class="w">Izan</span> ere, <span class="w">pribatutasunaren</span> <span class="w">inguruko</span> <span class="w">erregulazioa</span> <span class="w">berrikuntza</span> <span class="w">teknologikorako</span></div>
<div class="t s15" style="left:948.50px;top:454px;font-size:15px;line-height:15px;font-weight:400;color:#222;letter-spacing:0.183px;"><span class="w">trabatzat</span> <span class="w">hartzen</span> <span class="w">da</span> <span class="w">askotan</span>. <span class="w">Bestalde</span>, <span class="w">elektronikoki</span> <span class="w">sinatzen</span> <span class="w">dutenari</span> <span class="w">baiezkoa</span> <span class="w">ematen</span> <span class="w">dioten</span></div>
<div class="t s15" style="left:947.50px;top:477px;font-size:15px;line-height:15px;font-weight:400;color:#222;letter-spacing:0.125px;"><span class="w">pertsonek</span> <span class="w">pentsatu</span> <span class="w">gabe</span> <span class="w">egin</span> <span class="w">ohi</span> <span class="w">dute</span>. Eta <span class="w">ez</span> <span class="w">da</span> <span class="w">arraroa</span>, <span class="w">kontuan</span> <span class="w">hartzen</span> <span class="w">badugu</span> <span class="w">pertsona</span></div>
<div class="t s15" style="left:947.50px;top:499px;font-size:15px;line-height:15px;font-weight:400;color:#222;letter-spacing:0.202px;"><span class="w">batek</span>, <span class="w">batez</span> <span class="w">beste</span>, <span class="lk">200 <span class="w">ordu</span> <span class="w">baino</span> <span class="w">gehiago</span> </span><span class="w">beharko</span> <span class="w">lituzkeela</span> <span class="w">urtebetean</span> <span class="w">bisitatzen</span> <span class="w">dituen</span></div>
<div class="t s15" style="left:948.50px;top:522px;font-size:15px;line-height:15px;font-weight:400;color:#222;letter-spacing:0.326px;"><span class="w">webguneen</span> <span class="w">pribatutasun-politikak</span> <span class="w">irakurtzeko</span></div>
<div class="t s15" style="left:132.00px;top:67px;font-size:15px;line-height:15px;font-weight:700;color:#000;letter-spacing:0.100px;">Ohar berria</div>
<div class="t s15" style="left:49.50px;top:112px;font-size:15px;line-height:15px;font-weight:400;color:#222;letter-spacing:0.200px;">Ohar guztiak</div>
<div class="t " style="left:277.50px;top:114px;font-size:13px;line-height:13px;font-weight:700;color:#3b3100;letter-spacing:0.000px;">6</div>
<div class="t s15" style="left:23.50px;top:167px;font-size:15px;line-height:15px;font-weight:700;color:#222;letter-spacing:0.244px;">Kategoriak</div>
<div class="t s15" style="left:49.50px;top:209px;font-size:15px;line-height:15px;font-weight:400;color:#222;letter-spacing:0.067px;">Sailkatu gabe</div>
<div class="t " style="left:277.60px;top:211px;font-size:13px;line-height:13px;font-weight:700;color:#3b3100;letter-spacing:0.000px;">6</div>
<div class="t s15" style="left:52.50px;top:852px;font-size:15px;line-height:15px;font-weight:400;color:#222;letter-spacing:0.075px;">Oharren ezarpenak</div>
<div class="t s15" style="left:371.50px;top:70px;font-size:15px;line-height:15px;font-weight:400;color:#6b6b6b;letter-spacing:0.215px;">Bilatu oharrak</div>
<div class="t s15" style="left:362.50px;top:116px;font-size:15px;line-height:15px;font-weight:400;color:#222;letter-spacing:0.200px;-webkit-text-stroke:0.45px #222">2026.03.06_Bileraren akta</div>
<div class="t s15" style="left:362.50px;top:162px;font-size:15px;line-height:15px;font-weight:400;color:#222;letter-spacing:0.200px;-webkit-text-stroke:0.45px #222">2026.03.02_Bileraren akta</div>
<div class="t s15" style="left:362.50px;top:208px;font-size:15px;line-height:15px;font-weight:400;color:#222;letter-spacing:0.200px;-webkit-text-stroke:0.45px #222">2026.02.21_Bileraren akta</div>
<div class="t s15" style="left:362.50px;top:254px;font-size:15px;line-height:15px;font-weight:400;color:#222;letter-spacing:0.200px;-webkit-text-stroke:0.45px #222">2026.02.08_Bileraren akta</div>
<div class="t s15" style="left:362.50px;top:300px;font-size:15px;line-height:15px;font-weight:400;color:#222;letter-spacing:0.200px;-webkit-text-stroke:0.45px #222">2026.02.01_Bileraren akta</div>
<div class="t s15" style="left:362.50px;top:346px;font-size:15px;line-height:15px;font-weight:400;color:#222;letter-spacing:0.236px;-webkit-text-stroke:0.45px #222">Osasun aplikazioetan emandako d...</div>
<div class="t s15" style="left:960.00px;top:601px;font-size:15px;line-height:15px;font-weight:400;color:#222;letter-spacing:-0.286px;"><span class="w">Eremua</span> 1</div>
<div class="t s15" style="left:1157.00px;top:601px;font-size:15px;line-height:15px;font-weight:400;color:#222;letter-spacing:0.000px;">A1</div>
<div class="t s15" style="left:1283.00px;top:601px;font-size:15px;line-height:15px;font-weight:400;color:#222;letter-spacing:0.000px;">B1</div>
<div class="t s15" style="left:1407.50px;top:601px;font-size:15px;line-height:15px;font-weight:400;color:#222;letter-spacing:0.000px;">C1</div>
<div class="t s15" style="left:960.00px;top:636px;font-size:15px;line-height:15px;font-weight:400;color:#222;letter-spacing:-0.286px;"><span class="w">Eremua</span> 2</div>
<div class="t s15" style="left:1157.00px;top:636px;font-size:15px;line-height:15px;font-weight:400;color:#222;letter-spacing:0.000px;">A2</div>
<div class="t s15" style="left:1283.00px;top:636px;font-size:15px;line-height:15px;font-weight:400;color:#222;letter-spacing:0.000px;">B2</div>
<div class="t s15" style="left:1407.50px;top:636px;font-size:15px;line-height:15px;font-weight:400;color:#222;letter-spacing:0.000px;">C2</div>
<div class="t s15" style="left:960.00px;top:671px;font-size:15px;line-height:15px;font-weight:400;color:#222;letter-spacing:-0.286px;"><span class="w">Eremua</span> 3</div>
<div class="t s15" style="left:1157.00px;top:671px;font-size:15px;line-height:15px;font-weight:400;color:#222;letter-spacing:0.000px;">A3</div>
<div class="t s15" style="left:1283.00px;top:671px;font-size:15px;line-height:15px;font-weight:400;color:#222;letter-spacing:0.000px;">B3</div>
<div class="t s15" style="left:1407.50px;top:671px;font-size:15px;line-height:15px;font-weight:400;color:#222;letter-spacing:0.000px;">C3</div>
<div class="t s15" style="left:960.00px;top:706px;font-size:15px;line-height:15px;font-weight:400;color:#222;letter-spacing:-0.429px;"><span class="w">Eremua</span> 4</div>
<div class="t s15" style="left:1157.00px;top:706px;font-size:15px;line-height:15px;font-weight:400;color:#222;letter-spacing:0.000px;">A4</div>
<div class="t s15" style="left:1283.00px;top:706px;font-size:15px;line-height:15px;font-weight:400;color:#222;letter-spacing:0.000px;">B4</div>
<div class="t s15" style="left:1407.50px;top:706px;font-size:15px;line-height:15px;font-weight:400;color:#222;letter-spacing:0.000px;">C4</div>
<div class="t s15" style="left:960.00px;top:741px;font-size:15px;line-height:15px;font-weight:400;color:#222;letter-spacing:-0.429px;"><span class="w">Eremua</span> 5</div>
<div class="t s15" style="left:1157.00px;top:741px;font-size:15px;line-height:15px;font-weight:400;color:#222;letter-spacing:0.000px;">A5</div>
<div class="t s15" style="left:1283.00px;top:741px;font-size:15px;line-height:15px;font-weight:400;color:#222;letter-spacing:0.000px;">B5</div>
<div class="t s15" style="left:1407.50px;top:741px;font-size:15px;line-height:15px;font-weight:400;color:#222;letter-spacing:0.000px;">C5</div>
<div class="t s15" style="left:1157.00px;top:566px;font-size:15px;line-height:15px;font-weight:400;color:#767676;letter-spacing:0.000px;">A</div>
<div class="t s15" style="left:1283.00px;top:566px;font-size:15px;line-height:15px;font-weight:400;color:#767676;letter-spacing:0.000px;">B</div>
<div class="t s15" style="left:1407.50px;top:566px;font-size:15px;line-height:15px;font-weight:400;color:#767676;letter-spacing:0.000px;">C</div>
</body></html>
